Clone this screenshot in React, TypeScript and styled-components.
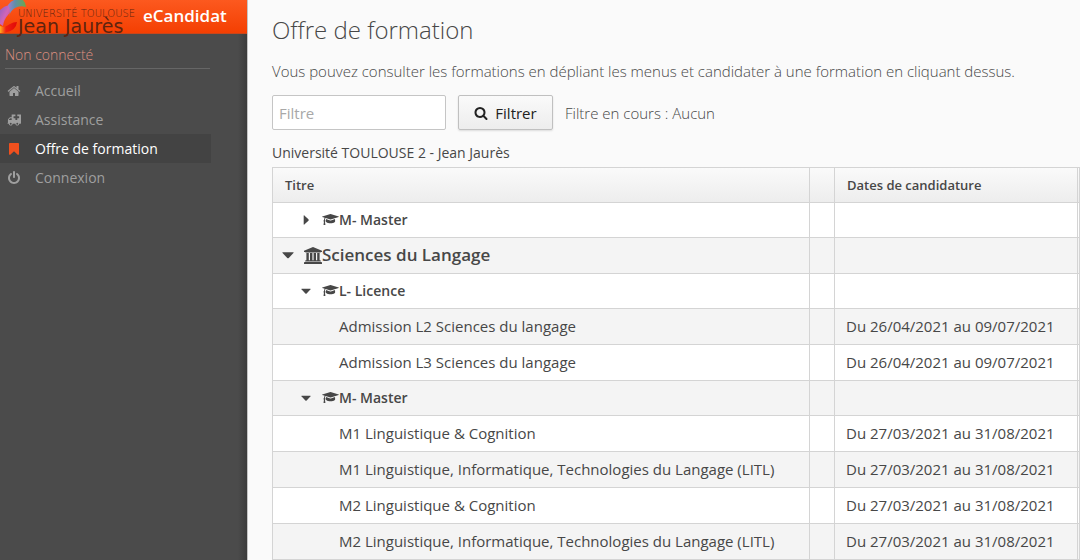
import React from "react";
import styled, { createGlobalStyle } from "styled-components";

const GlobalStyle = createGlobalStyle`
  * { box-sizing: border-box; }
  body {
    margin: 0;
    background: #fafafa;
    color: #474747;
    font-family: "Open Sans", sans-serif;
    font-size: 14px;
    overflow: hidden;
  }
`;

const Page = styled.div`
  display: flex;
  min-height: 100vh;
`;

const Sidebar = styled.aside`
  flex: 0 0 247px;
  background: linear-gradient(to left, #3c3c3c, #4b4b4b 9px);
`;

const Brand = styled.header`
  display: flex;
  height: 34px;
  background: linear-gradient(#fc591f, #f43f02);
  border-bottom: 1px solid #c9451a;
`;

const Emblem = styled.svg`
  flex: none;
  width: 28px;
  height: 33px;
`;

const Wordmark = styled.div`
  flex: none;
  width: 125px;
  margin-left: -10px;
  padding-top: 8px;
  color: #5e2410;
  font-family: "DejaVu Sans", sans-serif;
  white-space: nowrap;
`;

const WordmarkTop = styled.div`
  font-size: 10px;
  font-weight: 200;
  line-height: 11px;
`;

const WordmarkMain = styled.div`
  font-size: 19px;
  line-height: 15px;
`;

const AppName = styled.div`
  color: #fff;
  font-size: 17px;
  font-weight: 600;
  line-height: 31px;
`;

const UserStatus = styled.div`
  margin: 0 37px 7px 5px;
  border-bottom: 1px solid #666;
  color: #de8f80;
  font-weight: 300;
  line-height: 22px;
  padding: 10px 0 2px;
`;

const Menu = styled.nav`
  display: flex;
  flex-direction: column;
  margin-right: 36px;
`;

const MenuLink = styled.a<{ $active?: boolean }>`
  display: flex;
  align-items: center;
  height: 29px;
  padding-left: 7px;
  gap: 14px;
  color: ${(p) => (p.$active ? "#fff" : "#9f9f9f")};
  background: ${(p) => (p.$active ? "#434343" : "transparent")};
  font-weight: ${(p) => (p.$active ? 500 : 400)};
  text-decoration: none;
  svg {
    width: 14px;
    color: ${(p) => (p.$active ? "#f0501e" : "inherit")};
  }
`;

const Main = styled.main`
  flex: 1;
  min-width: 0;
  padding: 12px 0 0 25px;
  box-shadow: inset 1px 0 0 #c4c4c4;
`;

const Title = styled.h1`
  margin: 0;
  font-size: 24px;
  font-weight: 300;
  line-height: 36px;
`;

const Intro = styled.p`
  margin: 12px 0 13px;
  font-size: 15px;
  font-weight: 300;
  line-height: 22px;
`;

const FilterBar = styled.form`
  display: flex;
  align-items: center;
  gap: 12px;
  font-size: 15px;
`;

const FilterInput = styled.input`
  width: 174px;
  height: 35px;
  padding: 0 6px;
  border: 1px solid #c5c5c5;
  border-radius: 2px;
  background: #fff;
  color: #474747;
  font: inherit;
  &::placeholder { color: #a8a8a8; }
`;

const FilterButton = styled.button`
  display: flex;
  align-items: center;
  justify-content: center;
  gap: 7px;
  width: 95px;
  height: 35px;
  padding: 0;
  border: 1px solid #c0c0c0;
  border-radius: 2px;
  background: linear-gradient(#fafafa, #ededed);
  box-shadow: 0 1px 2px rgba(0, 0, 0, 0.12);
  color: #222;
  font: inherit;
  font-weight: 500;
`;

const FilterState = styled.span`
  font-weight: 300;
`;

const TableWrap = styled.section`
  margin-top: 12px;
`;

const Tree = styled.table`
  width: 100%;
  table-layout: fixed;
  border-collapse: separate;
  border-spacing: 0;
  border-left: 1px solid #d4d4d4;
  caption {
    padding-bottom: 3px;
    font-size: 14px;
    line-height: 22px;
    text-align: left;
  }
`;

const Col = styled.col<{ $width?: number }>`
  width: ${(p) => (p.$width ? p.$width + "px" : "auto")};
`;

const HeadCell = styled.th`
  height: 36px;
  padding: 0 12px;
  border: solid #d4d4d4;
  border-width: 1px 1px 1px 0;
  background: linear-gradient(#fafafa, #ededed);
  font-size: 13px;
  line-height: 18px;
  font-weight: 600;
  text-align: left;
  &:last-child { padding: 0; }
`;

type Level = "university" | "diploma" | "course";

const Row = styled.tr<{ $level: Level }>`
  height: ${(p) => (p.$level === "diploma" ? 35 : 36)}px;
  background: #fff;
  font-size: ${(p) => ({ university: 17, diploma: 14, course: 15 })[p.$level]}px;
  font-weight: ${(p) => (p.$level === "course" ? 400 : 600)};
  &:nth-child(even) { background: #f4f4f4; }
`;

const Cell = styled.td`
  padding: 0 0 1px 11px;
  border: solid #d4d4d4;
  border-width: 0 1px 1px 0;
  white-space: nowrap;
  &:last-child { padding: 0; }
`;

const indent = { university: 9, diploma: 27, course: 66 };

const Node = styled.div<{ $level: Level }>`
  display: flex;
  align-items: center;
  margin-left: -11px;
  padding-left: ${(p) => indent[p.$level]}px;
  line-height: 24px;
`;

const Toggle = styled.button`
  display: flex;
  align-items: center;
  justify-content: center;
  width: 12px;
  height: 16px;
  margin-right: 10px;
  padding: 0;
  border: 0;
  background: none;
  color: inherit;
`;

const Glyph = styled.svg`
  flex: none;
  display: block;
  fill: currentColor;
`;

const paths = {
  home: [1792, "M1472 992v480q0 26-19 45t-45 19h-384v-384h-256v384h-384q-26 0-45-19t-19-45v-480q0-1 .5-3t.5-3l575-474 575 474q1 2 1 6zm223-69l-62 74q-8 9-21 11h-3q-13 0-21-7l-692-577-692 577q-12 8-24 7-13-2-21-11l-62-74q-8-10-7-23.5t11-21.5l719-599q32-26 76-26t76 26l244 204v-195q0-14 9-23t23-9h192q14 0 23 9t9 23v408l219 182q10 8 11 21.5t-7 23.5z"],
  ambulance: [1920, "M640 1408q0-52-38-90t-90-38-90 38-38 90 38 90 90 38 90-38 38-90zm-384-512h384v-256h-158q-14 2-22 9l-195 195q-7 12-9 22v30zm1280 512q0-52-38-90t-90-38-90 38-38 90 38 90 90 38 90-38 38-90zm128-800v-192q0-14-9-23t-23-9h-224v-224q0-14-9-23t-23-9h-192q-14 0-23 9t-9 23v224h-224q-14 0-23 9t-9 23v192q0 14 9 23t23 9h224v224q0 14 9 23t23 9h192q14 0 23-9t9-23v-224h224q14 0 23-9t9-23zm256-544v1280q0 26-19 45t-45 19h-192q0 106-75 181t-181 75-181-75-75-181h-384q0 106-75 181t-181 75-181-75-75-181h-128q-26 0-45-19t-19-45 19-45 45-19v-416q0-26 13-58t32-51l198-198q19-19 51-32t58-13h160v-320q0-26 19-45t45-19h1152q26 0 45 19t19 45z"],
  bookmark: [1792, "M1420 128q23 0 44 9 33 13 52.500 41t19.500 62v1289q0 34-19.500 62t-52.500 41q-19 8-44 8-48 0-83-32l-441-424-441 424q-36 33-83 33-23 0-44-9-33-13-52.500-41t-19.500-62v-1289q0-34 19.500-62t52.500-41q21-9 44-9h1048z"],
  power: [1792, "M1664 896q0 156-61 298t-164 245-245 164-298 61-298-61-245-164-164-245-61-298q0-182 80.500-343t226.500-270q43-32 95.500-25t83.500 50q32 42 24.500 94.500t-49.500 84.500q-98 74-151.500 181t-53.500 228q0 104 40.500 198.500t109.500 163.500 163.500 109.500 198.500 40.500 198.500-40.500 163.500-109.500 109.500-163.500 40.500-198.500q0-121-53.500-228t-151.500-181q-42-32-49.500-84.500t24.500-94.500q31-43 84-50t95 25q146 109 226.500 270t80.500 343zm-640-768v640q0 52-38 90t-90 38-90-38-38-90v-640q0-52 38-90t90-38 90 38 38 90z"],
  search: [1792, "M1216 832q0-185-131.500-316.500t-316.500-131.500-316.500 131.500-131.500 316.500 131.500 316.500 316.500 131.500 316.500-131.500 131.500-316.500zm512 832q0 52-38 90t-90 38q-54 0-90-38l-343-342q-179 124-399 124-143 0-273.500-55.500t-225-150-150-225-55.500-273.500 55.500-273.500 150-225 225-150 273.500-55.500 273.500 55.500 225 150 150 225 55.500 273.500q0 220-124 399l343 343q37 37 37 90z"],
  university: [1920, "M960 0l960 384v128h-128q0 26-20.500 45t-48.500 19h-1526q-28 0-48.500-19t-20.500-45h-128v-128zm-704 640h256v768h128v-768h256v768h128v-768h256v768h128v-768h256v768h59q28 0 48.500 19t20.500 45v64h-1664v-64q0-26 20.500-45t48.500-19h59v-768zm1595 960q28 0 48.500 19t20.500 45v128h-1920v-128q0-26 20.500-45t48.500-19h1782z"],
  diploma: [2304, "M1774 836l18 316q4 69-82 128t-235 93.500-323 34.500-323-34.500-235-93.500-82-128l18-316 574 181q22 7 48 7t48-7zm530-324q0 23-22 31l-1120 352q-4 1-10 1t-10-1l-652-206q-43 34-71 111.500t-34 178.500q63 36 63 109 0 69-58 107l58 433q2 14-8 25-9 11-24 11h-192q-15 0-24-11-10-11-8-25l58-433q-58-38-58-107 0-73 65-111 11-207 98-330l-333-104q-22-8-22-31t22-31l1120-352q4-1 10-1t10 1l1120 352q22 8 22 31z"],
  open: [1792, "M130 480h1532q130 0 50 110l-700 740q-116 110-232 0l-700-740q-80-110 50-110z"],
  closed: [1792, "M480 130v1532q0 130 110 50l740-700q110-116 0-232l-740-700q-110-80-110 50z"],
} as const;

const Icon = ({ name, size }: { name: keyof typeof paths; size: number }) => (
  <Glyph viewBox={`0 0 ${paths[name][0]} 1792`} height={size} width={Math.round((size * paths[name][0]) / 1792)} aria-hidden>
    <path d={paths[name][1]} />
  </Glyph>
);

const menu = [
  { icon: "home", label: "Accueil" },
  { icon: "ambulance", label: "Assistance" },
  { icon: "bookmark", label: "Offre de formation", active: true },
  { icon: "power", label: "Connexion" },
] as const;

const rows: { level: Level; label: string; dates?: string; open?: boolean }[] = [
  { level: "diploma", label: "M- Master" },
  { level: "university", label: "Sciences du Langage", open: true },
  { level: "diploma", label: "L- Licence", open: true },
  { level: "course", label: "Admission L2 Sciences du langage", dates: "Du 26/04/2021 au 09/07/2021" },
  { level: "course", label: "Admission L3 Sciences du langage", dates: "Du 26/04/2021 au 09/07/2021" },
  { level: "diploma", label: "M- Master", open: true },
  { level: "course", label: "M1 Linguistique & Cognition", dates: "Du 27/03/2021 au 31/08/2021" },
  { level: "course", label: "M1 Linguistique, Informatique, Technologies du Langage (LITL)", dates: "Du 27/03/2021 au 31/08/2021" },
  { level: "course", label: "M2 Linguistique & Cognition", dates: "Du 27/03/2021 au 31/08/2021" },
  { level: "course", label: "M2 Linguistique, Informatique, Technologies du Langage (LITL)", dates: "Du 27/03/2021 au 31/08/2021" },
];

export default function App() {
  return (
    <Page>
      <GlobalStyle />
      <Sidebar>
        <Brand>
          <Emblem viewBox="0 0 28 33" aria-hidden>
            <defs>
              <linearGradient id="petal" x1="0" y1="0" x2="1" y2="1">
                <stop offset="0" stopColor="#8f5fc0" />
                <stop offset="0.5" stopColor="#cf66b8" />
                <stop offset="1" stopColor="#c84a90" />
              </linearGradient>
              <linearGradient id="leaf" x1="0" y1="0" x2="1" y2="0">
                <stop offset="0" stopColor="#9a80d0" />
                <stop offset="0.4" stopColor="#5f8fa8" />
                <stop offset="1" stopColor="#6aa848" />
              </linearGradient>
              <linearGradient id="flame" x1="0" y1="0" x2="1" y2="0">
                <stop offset="0" stopColor="#ffb020" />
                <stop offset="0.35" stopColor="#f02010" />
                <stop offset="1" stopColor="#e00808" />
              </linearGradient>
            </defs>
            <path d="M0 10Q4 6 9 5Q12 11 8 15Q4 19 3 26L0 24Z" fill="url(#petal)" />
            <path d="M8 5Q11 1 14 0H23Q26 3 26 7Q20 5 15 8Q10 11 9 17Q11 10 8 5Z" fill="url(#leaf)" />
            <path d="M0 26L4 27Q7 26 10 24Q13 22 17 22Q16 30 7 32L4 33H0Z" fill="url(#flame)" />
          </Emblem>
          <Wordmark>
            <WordmarkTop>UNIVERSITÉ TOULOUSE</WordmarkTop>
            <WordmarkMain>Jean Jaurès</WordmarkMain>
          </Wordmark>
          <AppName>eCandidat</AppName>
        </Brand>
        <UserStatus>Non connecté</UserStatus>
        <Menu>
          {menu.map((m) => (
            <MenuLink key={m.label} href="#" $active={"active" in m}>
              <Icon name={m.icon} size={14} />
              {m.label}
            </MenuLink>
          ))}
        </Menu>
      </Sidebar>
      <Main>
        <Title>Offre de formation</Title>
        <Intro>Vous pouvez consulter les formations en dépliant les menus et candidater à une formation en cliquant dessus.</Intro>
        <FilterBar onSubmit={(e) => e.preventDefault()}>
          <FilterInput placeholder="Filtre" aria-label="Filtre" />
          <FilterButton type="submit">
            <Icon name="search" size={14} />
            Filtrer
          </FilterButton>
          <FilterState>Filtre en cours : Aucun</FilterState>
        </FilterBar>
        <TableWrap>
          <Tree>
            <caption>Université TOULOUSE 2 - Jean Jaurès</caption>
            <colgroup>
              <Col />
              <Col $width={25} />
              <Col $width={243} />
              <Col $width={2} />
            </colgroup>
            <thead>
              <tr>
                <HeadCell scope="col">Titre</HeadCell>
                <HeadCell scope="col" />
                <HeadCell scope="col">Dates de candidature</HeadCell>
                <HeadCell scope="col" />
              </tr>
            </thead>
            <tbody>
              {rows.map((r, i) => (
                <Row key={i} $level={r.level}>
                  <Cell>
                    <Node $level={r.level}>
                      {r.level !== "course" && (
                        <>
                          <Toggle type="button" aria-expanded={!!r.open} aria-label={r.label}>
                            <Icon name={r.open ? "open" : "closed"} size={r.level === "university" ? 12 : 10} />
                          </Toggle>
                          <Icon name={r.level} size={r.level === "university" ? 17 : 13} />
                        </>
                      )}
                      {r.label}
                    </Node>
                  </Cell>
                  <Cell />
                  <Cell>{r.dates}</Cell>
                  <Cell />
                </Row>
              ))}
            </tbody>
          </Tree>
        </TableWrap>
      </Main>
    </Page>
  );
}
